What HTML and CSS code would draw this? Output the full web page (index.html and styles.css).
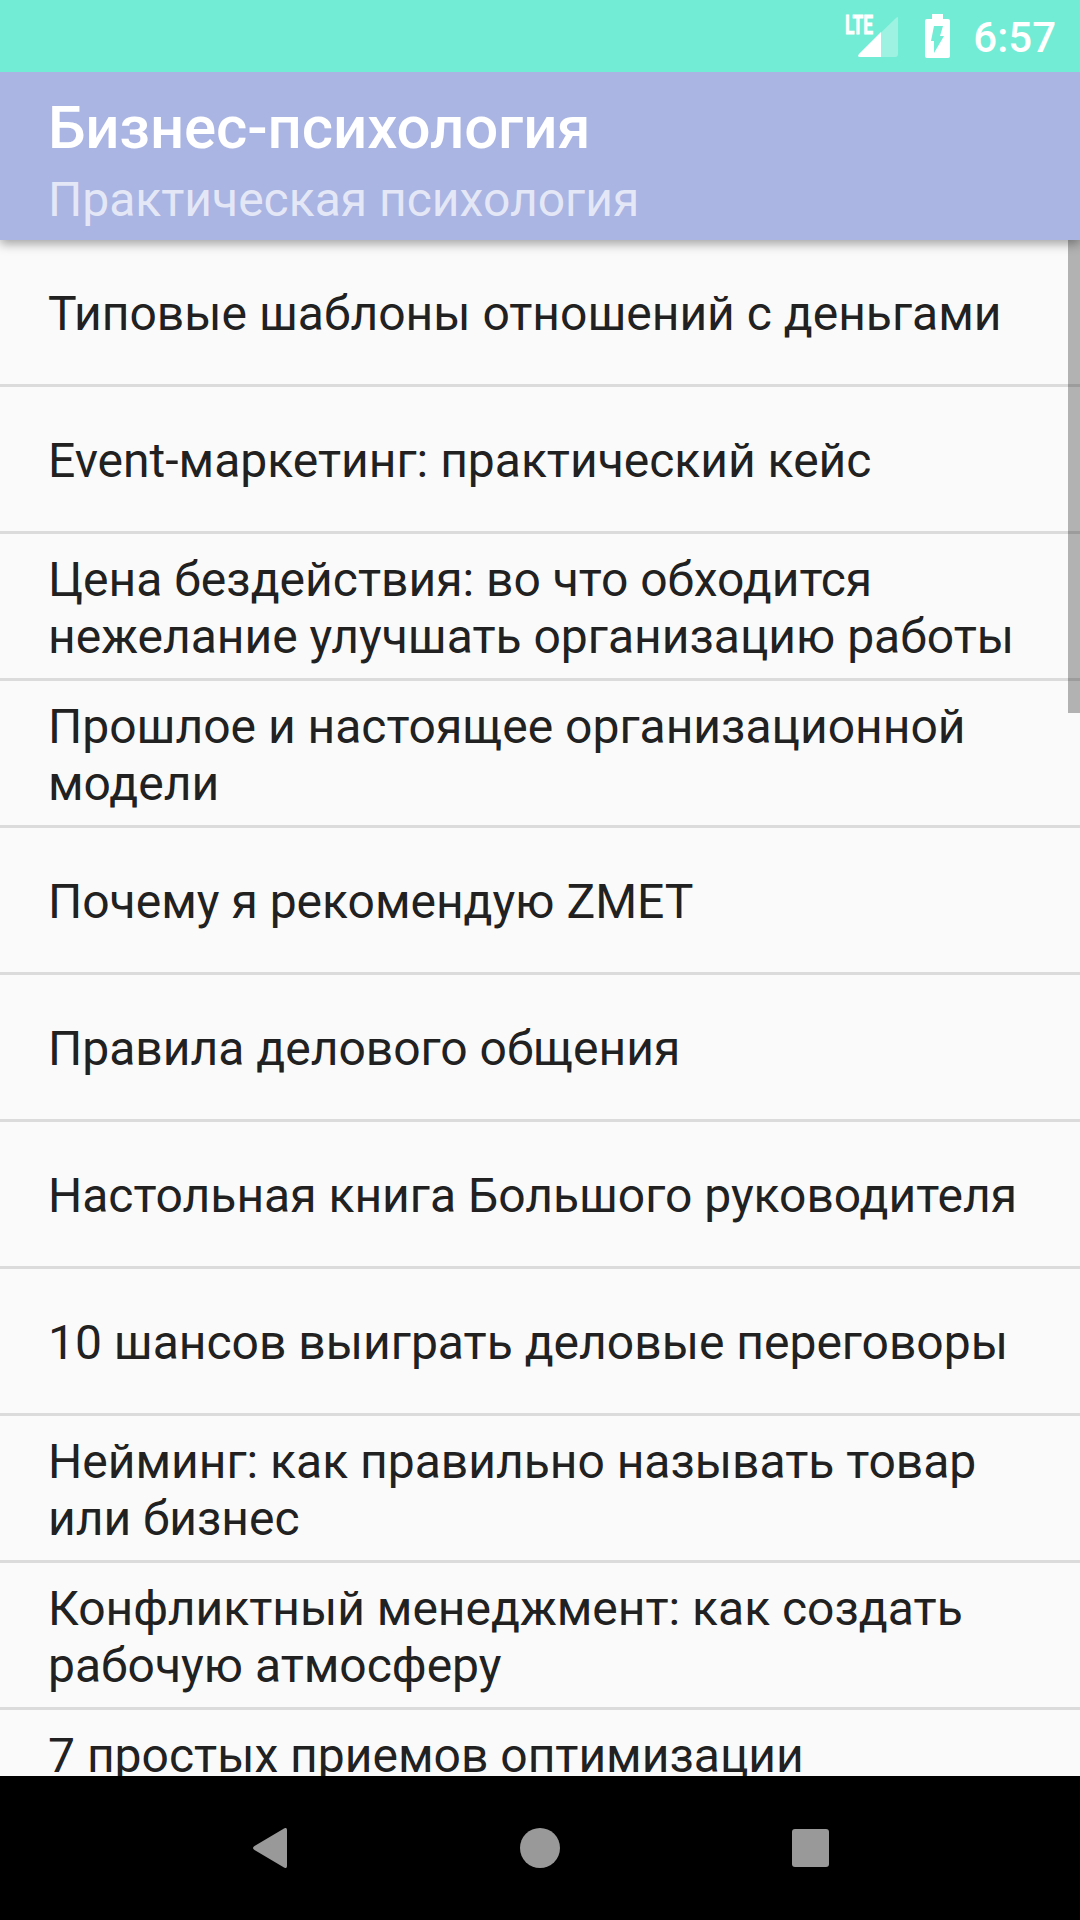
FILE: index.html
```html
<!DOCTYPE html>
<html lang="ru">
<head>
  <meta charset="UTF-8">
  <meta name="viewport" content="width=device-width, initial-scale=1.0">
  <title>Бизнес-психология</title>
  <link rel="stylesheet" href="styles.css">
</head>
<body>

  <div class="status-bar">
    <svg class="signal" width="54" height="44" viewBox="0 0 54 44">
      <path d="M53 4v36q0 3-3 3H15q-3 0-1-3L51 4q2-2 2 0z" fill="#fff" fill-opacity=".3"/>
      <path d="M36 18v25H15q-3 0-1-3z" fill="#fff"/>
      <text class="lte" x="0" y="20" textLength="28" lengthAdjust="spacingAndGlyphs">LTE</text>
    </svg>
    <svg class="battery" width="25" height="44" viewBox="0 0 25 44">
      <path d="M7 0h11v5h5q2 0 2 2v35q0 2-2 2H2q-2 0-2-2V7q0-2 2-2h5z" fill="#fff"/>
      <path d="M9 12h9l-3 10h4L9 39V27H6z" fill="#73ecd5"/>
    </svg>
    <span class="clock">6:57</span>
  </div>

  <header class="toolbar">
    <h1>Бизнес-психология</h1>
    <h2>Практическая психология</h2>
  </header>

  <main class="content">
    <ul class="list">
      <li>Типовые шаблоны отношений с деньгами</li>
      <li>Event-маркетинг: практический кейс</li>
      <li>Цена бездействия: во что обходится нежелание улучшать организацию работы</li>
      <li>Прошлое и настоящее организационной модели</li>
      <li>Почему я рекомендую ZMET</li>
      <li>Правила делового общения</li>
      <li>Настольная книга Большого руководителя</li>
      <li>10 шансов выиграть деловые переговоры</li>
      <li>Нейминг: как правильно называть товар или бизнес</li>
      <li>Конфликтный менеджмент: как создать рабочую атмосферу</li>
      <li>7 простых приемов оптимизации<br>&nbsp;</li>
    </ul>
    <div class="scrollbar"></div>
  </main>

  <nav class="nav-bar">
    <svg width="36" height="40" viewBox="0 0 36 40"><path d="M35 2v36q0 3-3 1.600L2.500 22q-3-2 0-4L32 .4q3-1.400 3 1.600z"/></svg>
    <svg width="40" height="40" viewBox="0 0 40 40"><circle cx="20" cy="20" r="20"/></svg>
    <svg width="37" height="38" viewBox="0 0 37 38"><rect width="37" height="38" rx="3"/></svg>
  </nav>

</body>
</html>
```
FILE: styles.css
```css
* {
  box-sizing: border-box;
}
body {
  margin: 0;
  height: 1920px;
  display: flex;
  flex-direction: column;
  overflow: hidden;
  font-family: Roboto, sans-serif;
  background-color: #fafafa;
}
.status-bar {
  height: 72px;
  flex: none;
  display: flex;
  justify-content: flex-end;
  align-items: center;
  padding-right: 24px;
  background-color: #73ecd5;
  color: #fff;
  position: relative;
  z-index: 2;
}
.signal {
  overflow: visible;
}
.lte {
  font-size: 26px;
  font-weight: 700;
  fill: #fff;
  stroke: #fff;
  stroke-width: 0.8px;
}
.battery {
  margin: 0 23px 0 26px;
}
.clock {
  padding-top: 2px;
  font-size: 42px;
  font-weight: 500;
}
.toolbar {
  height: 168px;
  flex: none;
  padding: 20px 48px 0;
  background-color: #abb5e3;
  color: #fff;
  position: relative;
  z-index: 1;
  box-shadow: 0 4px 10px rgba(0, 0, 0, 0.35);
}
.toolbar h1 {
  margin: 0;
  font-size: 60px;
  font-weight: 500;
  line-height: 72px;
  letter-spacing: -0.1px;
}
.toolbar h2 {
  margin: 0;
  font-size: 48px;
  font-weight: 400;
  line-height: 72px;
  color: rgba(255, 255, 255, 0.7);
}
.content {
  flex: 1;
  min-height: 0;
  overflow: hidden;
  position: relative;
}
.list {
  margin: 0;
  padding: 0;
  list-style: none;
}
.list li {
  height: 147px;
  display: flex;
  align-items: center;
  padding: 3px 48px 0;
  border-bottom: 3px solid #dbdbdb;
  font-size: 48px;
  line-height: 57px;
  color: #212121;
}
/* scroll thumb over the right edge of the list */
.scrollbar {
  position: absolute;
  top: 0;
  right: 0;
  width: 12px;
  height: 473px;
  background-color: rgba(0, 0, 0, 0.286);
}
.nav-bar {
  height: 144px;
  flex: none;
  display: flex;
  justify-content: center;
  align-items: center;
  gap: 232px;
  padding-left: 1px;
  background-color: #000;
  fill: #999;
}
```
